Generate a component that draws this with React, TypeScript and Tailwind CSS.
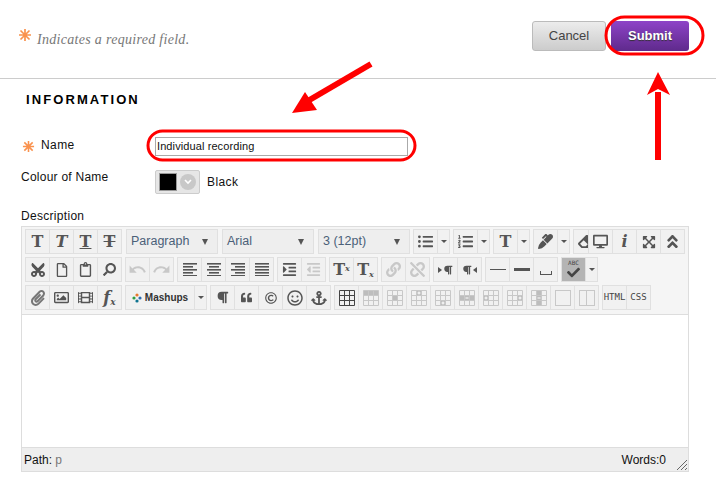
import type { ReactNode } from "react";
import { MdRedo, MdUndo } from "react-icons/md";
import {
  FaAnchor,
  FaAngleDoubleUp,
  FaCheck,
  FaCut,
  FaDesktop,
  FaEraser,
  FaExpandArrowsAlt,
  FaIndent,
  FaLink,
  FaListOl,
  FaListUl,
  FaMarker,
  FaOutdent,
  FaParagraph,
  FaPaperclip,
  FaQuoteLeft,
  FaRegClipboard,
  FaRegCopyright,
  FaRegFile,
  FaRegImage,
  FaRegSmile,
  FaSearch,
  FaUnlink,
  FaFilm,
} from "react-icons/fa";

const Asterisk = ({ size }: { size: number }) => (
  <svg width={size} height={size} viewBox="0 0 14 14" stroke="#f9924e" strokeWidth="1.7" fill="none">
    <path d="M7 1V13M1 7H13M2.5 2.5L11.5 11.5M11.5 2.5L2.5 11.5" />
  </svg>
);

const Cell = ({ children, muted }: { children?: ReactNode; muted?: boolean }) => (
  <div
    className={`flex h-full w-6 shrink-0 items-center justify-center border-l border-[#e0e0e0] first:w-[23px] first:border-l-0 ${
      muted ? "text-[#c8c8c8]" : "text-[#555555]"
    }`}
  >
    {children}
  </div>
);

const Caret = () => (
  <div className="flex h-full w-3 shrink-0 items-center justify-center border-l border-[#e0e0e0]">
    <div className="h-0 w-0 border-x-[3px] border-t-[3px] border-x-transparent border-t-[#555555]" />
  </div>
);

const Group = ({ children, className = "" }: { children: ReactNode; className?: string }) => (
  <div className={`flex h-[25px] shrink-0 items-center border border-[#e0e0e0] bg-[#f1f1f1] ${className}`}>{children}</div>
);

const Select = ({ label }: { label: string }) => (
  <div className="ml-px flex h-[25px] w-[92px] shrink-0 items-center justify-between border border-[#e0e0e0] bg-[#eeeeee] pl-[4px] pr-[9px] text-[12.5px] text-[#4a6078]">
    <span>{label}</span>
    <div className="h-0 w-0 border-x-[3px] border-t-[6px] border-x-transparent border-t-[#555555]" />
  </div>
);

const SerifT = ({ children, sub, sup }: { children: ReactNode; sub?: boolean; sup?: boolean }) => (
  <span className="font-['DejaVu_Serif',serif] text-[16px] font-bold leading-none text-[#555555]">
    {children}
    {sup && <sup className="text-[8px] italic">x</sup>}
    {sub && <sub className="text-[8px] italic">x</sub>}
  </span>
);

const Bars = ({ align }: { align: "left" | "center" | "right" | "full" }) => {
  const rows = [14, 10, 14, 10, 14];
  return (
    <svg width="14" height="13" viewBox="0 0 14 13" fill="#555555">
      {rows.map((w, i) => {
        const width = align === "full" ? 14 : w;
        const x = align === "left" || align === "full" ? 0 : align === "center" ? (14 - width) / 2 : 14 - width;
        return <rect key={i} x={x} y={i * 3} width={width} height="1.6" />;
      })}
    </svg>
  );
};

const TableIcon = ({ dark, shade = [], mark }: { dark?: boolean; shade?: number[]; mark?: string }) => {
  const line = dark ? "#444444" : "#c8c8c8";
  const cells = [0, 1, 2, 3, 4, 5, 6, 7, 8];
  return (
    <svg width="16" height="16" viewBox="0 0 16 16" fill="none">
      {cells.map((c) =>
        shade.includes(c) ? (
          <rect key={c} x={0.5 + (c % 3) * 5} y={0.5 + Math.floor(c / 3) * 5} width="5" height="5" fill="#bdbdbd" />
        ) : null,
      )}
      <path stroke={line} d="M.5.5h15v15H.5zM5.5.5v15M10.5.5v15M.5 5.5h15M.5 10.5h15" />
      {mark && <path stroke="white" d={mark} />}
    </svg>
  );
};

const App = () => {
  return (
    <div className="relative h-[487px] w-[716px] overflow-hidden bg-white font-['Liberation_Sans',sans-serif] text-[#111111]">
      {/* header */}
      <div className="flex h-[79px] items-start border-b border-[#cccccc] pl-[18px]">
        <div className="mt-[28px]">
          <Asterisk size={14} />
        </div>
        <p className="ml-[5px] mt-[29px] font-['Liberation_Serif',serif] text-[14px] italic tracking-[0.3px] text-[#777777]">
          Indicates a required field.
        </p>
        <div className="ml-auto mr-[27px] mt-[21px] flex gap-[5px]">
          <div className="flex h-[30px] w-[74px] items-center justify-center rounded-[3px] border border-[#bbbbbb] bg-gradient-to-b from-[#ececec] to-[#cccccc] text-[13px] text-[#444444]">
            Cancel
          </div>
          <div className="flex h-[30px] w-[78px] items-center justify-center rounded-[3px] bg-gradient-to-b from-[#8e44c8] to-[#5f2a8c] text-[13px] font-bold text-white [text-shadow:0_1px_1px_#333333]">
            Submit
          </div>
        </div>
      </div>

      <h2 className="ml-[26px] mt-[14px] text-[13px] font-bold leading-[14px] tracking-[2.1px] text-black">INFORMATION</h2>

      {/* form */}
      <div className="mt-[30px] flex h-[19px] items-center pl-[22px]">
        <div className="flex w-[133px] items-center gap-[6px] text-[12px] tracking-[0.4px]">
          <Asterisk size={13} />
          <span className="-mt-[4px]">Name</span>
        </div>
        <div className="flex h-[19px] w-[253px] items-center border border-[#aaaaaa] pl-[1px] text-[11px] tracking-[0.1px]">
          Individual recording
        </div>
      </div>
      <div className="mt-[14px] flex h-[24px] pl-[21px]">
        <span className="w-[134px] text-[12px] leading-[15px] tracking-[0.25px]">Colour of Name</span>
        <div className="flex h-[24px] w-[45px] items-center gap-[3px] rounded-[2px] border border-[#cccccc] bg-[#e6e6e6] pl-[3px]">
          <div className="h-[18px] w-[18px] border border-[#999999] bg-black" />
          <div className="flex h-[16px] w-[16px] items-center justify-center rounded-full bg-[#c8c8c8]">
            <svg width="8" height="6" viewBox="0 0 8 6" fill="none" stroke="white" strokeWidth="1.6">
              <path d="M1 1l3 3 3-3" />
            </svg>
          </div>
        </div>
        <span className="ml-[7px] self-center text-[12px] tracking-[0.4px]">Black</span>
      </div>
      <p className="ml-[21px] mt-[15px] text-[12px] leading-[14px] tracking-[0.3px]">Description</p>

      {/* editor */}
      <div className="ml-[21px] mt-[3px] w-[668px] border border-[#dddddd]">
        <div className="flex h-[88px] flex-col gap-[3px] border-b border-[#dddddd] bg-[#f5f5f5] pl-[3px] pt-[2px]">
          <div className="flex items-center gap-[3px]">
            <Group>
              <Cell><SerifT>T</SerifT></Cell>
              <Cell><SerifT><i>T</i></SerifT></Cell>
              <Cell><SerifT><u>T</u></SerifT></Cell>
              <Cell><SerifT><s>T</s></SerifT></Cell>
            </Group>
            <Select label="Paragraph" />
            <Select label="Arial" />
            <Select label="3 (12pt)" />
            <Group><Cell><FaListUl size={15} /></Cell><Caret /></Group>
            <Group><Cell><FaListOl size={15} /></Cell><Caret /></Group>
            <Group><Cell><SerifT>T</SerifT></Cell><Caret /></Group>
            <Group><Cell><FaMarker size={15} /></Cell><Caret /></Group>
            <Group><Cell><FaEraser size={15} /></Cell></Group>
            <Group className="relative -ml-[13px]">
              <Cell><FaDesktop size={15} /></Cell>
              <Cell><SerifT><i>i</i></SerifT></Cell>
              <Cell><FaExpandArrowsAlt size={14} /></Cell>
              <Cell><FaAngleDoubleUp size={17} /></Cell>
            </Group>
          </div>
          <div className="flex items-center gap-[3px]">
            <Group>
              <Cell><FaCut size={16} className="-rotate-90" /></Cell>
              <Cell><FaRegFile size={14} /></Cell>
              <Cell><FaRegClipboard size={15} /></Cell>
              <Cell><FaSearch size={13} className="-scale-x-100" /></Cell>
            </Group>
            <Group>
              <Cell muted><MdUndo size={19} /></Cell>
              <Cell muted><MdRedo size={19} /></Cell>
            </Group>
            <Group>
              <Cell><Bars align="left" /></Cell>
              <Cell><Bars align="center" /></Cell>
              <Cell><Bars align="right" /></Cell>
              <Cell><Bars align="full" /></Cell>
            </Group>
            <Group>
              <Cell><FaIndent size={15} /></Cell>
              <Cell muted><FaOutdent size={15} /></Cell>
            </Group>
            <Group>
              <Cell><SerifT sup>T</SerifT></Cell>
              <Cell><SerifT sub>T</SerifT></Cell>
            </Group>
            <Group>
              <Cell muted><FaLink size={15} /></Cell>
              <Cell muted><FaUnlink size={15} /></Cell>
            </Group>
            <Group>
              <Cell>
                <div className="flex items-center gap-px">
                  <div className="h-0 w-0 border-y-[3px] border-l-[4px] border-y-transparent border-l-[#555555]" />
                  <FaParagraph size={10} />
                </div>
              </Cell>
              <Cell>
                <div className="flex items-center gap-px">
                  <FaParagraph size={10} />
                  <div className="h-0 w-0 border-y-[3px] border-r-[4px] border-y-transparent border-r-[#555555]" />
                </div>
              </Cell>
            </Group>
            <Group>
              <Cell><div className="h-px w-4 bg-[#555555]" /></Cell>
              <Cell><div className="h-[3px] w-4 bg-[#555555]" /></Cell>
              <Cell><div className="mt-[6px] h-[4px] w-[12px] border-x border-b border-[#555555]" /></Cell>
            </Group>
            <Group>
              <div className="flex h-full w-[23px] flex-col items-center justify-center bg-[#b4b4b4] text-[#444444]">
                <span className="font-['DejaVu_Sans_Mono',monospace] text-[6px] leading-[6px]">ABC</span>
                <FaCheck size={13} />
              </div>
              <Caret />
            </Group>
          </div>
          <div className="flex items-center gap-[3px]">
            <Group>
              <Cell><FaPaperclip size={16} className="text-[#777777]" /></Cell>
              <Cell><FaRegImage size={15} /></Cell>
              <Cell><FaFilm size={15} /></Cell>
              <Cell><SerifT><i>f<sub className="text-[9px]">x</sub></i></SerifT></Cell>
            </Group>
            <Group className="w-[82px]">
              <div className="flex h-full flex-1 items-center justify-center gap-[3px] text-[10px] font-bold text-[#333333]">
                <svg width="10" height="10" viewBox="0 0 10 10">
                  <circle cx="5" cy="2" r="1.6" fill="#e8792b" />
                  <circle cx="2" cy="5" r="1.6" fill="#2f9e44" />
                  <circle cx="8" cy="5" r="1.6" fill="#2b6cb0" />
                  <circle cx="5" cy="8" r="1.6" fill="#0e7490" />
                </svg>
                Mashups
              </div>
              <Caret />
            </Group>
            <Group>
              <Cell><FaParagraph size={13} /></Cell>
              <Cell><FaQuoteLeft size={11} /></Cell>
              <Cell><FaRegCopyright size={12} /></Cell>
              <Cell><FaRegSmile size={16} /></Cell>
              <Cell><FaAnchor size={16} /></Cell>
            </Group>
            <Group>
              <Cell><TableIcon dark /></Cell>
              <Cell><TableIcon shade={[0, 1, 2]} /></Cell>
              <Cell><TableIcon shade={[4]} /></Cell>
              <Cell><TableIcon shade={[1]} mark="M6.5 3h3M8 1.5v3" /></Cell>
              <Cell><TableIcon shade={[7]} mark="M6.5 13h3M8 11.5v3" /></Cell>
              <Cell><TableIcon shade={[3, 4, 5]} mark="M6.5 8h3" /></Cell>
              <Cell><TableIcon shade={[3]} mark="M1.5 8h3M3 6.5v3" /></Cell>
              <Cell><TableIcon shade={[5]} mark="M11.5 8h3M13 6.5v3" /></Cell>
              <Cell><TableIcon shade={[1, 4, 7]} mark="M6.5 8h3" /></Cell>
              <Cell><div className="h-[16px] w-[16px] border border-[#c8c8c8]" /></Cell>
              <Cell><div className="h-[16px] w-[16px] border border-[#c8c8c8] bg-[linear-gradient(#c8c8c8,#c8c8c8)] bg-[length:1px_100%] bg-center bg-no-repeat" /></Cell>
            </Group>
            <Group>
              <Cell><span className="font-['DejaVu_Sans_Mono',monospace] text-[9px] text-[#444444]">HTML</span></Cell>
              <Cell><span className="font-['DejaVu_Sans_Mono',monospace] text-[9px] text-[#444444]">CSS</span></Cell>
            </Group>
          </div>
        </div>
        <div className="h-[132px] bg-white" />
        <div className="relative flex h-[24px] items-center justify-between border-t border-[#dddddd] bg-[#eeeeee] pl-[2px] pr-[22px] text-[12px]">
          <span>
            Path: <span className="text-[#777777]">p</span>
          </span>
          <span>Words:0</span>
          <svg className="absolute bottom-0 right-0" width="12" height="12" viewBox="0 0 12 12" stroke="#666666" fill="none">
            <path d="M1 11L11 1M5 11L11 5M9 11L11 9" />
          </svg>
        </div>
      </div>

      {/* red annotations over the screenshot */}
      <svg className="pointer-events-none absolute left-0 top-0" width="716" height="487" viewBox="0 0 716 487" fill="none">
        <rect x="606" y="17" width="97" height="37" rx="18.5" stroke="#ff0000" strokeWidth="3" />
        <rect x="148" y="131" width="267" height="29" rx="14.5" stroke="#ff0000" strokeWidth="3" />
        <path d="M371 64L306 102" stroke="#ff0000" strokeWidth="6" />
        <path d="M292 113L305 92L317 110Z" fill="#ff0000" />
        <path d="M658 92V160" stroke="#ff0000" strokeWidth="6" />
        <path d="M658 72L670 95L658 89L647 95Z" fill="#ff0000" />
      </svg>
    </div>
  );
};

export default App;
